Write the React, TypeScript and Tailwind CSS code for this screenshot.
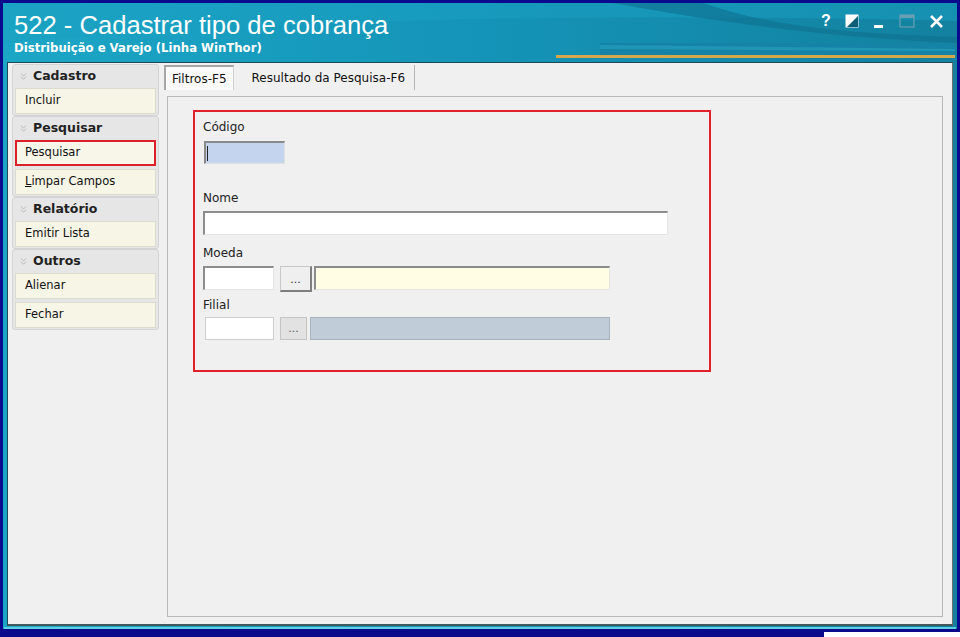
import { ChevronsDown } from 'lucide-react';

const UI = { fontFamily: 'Tahoma, "DejaVu Sans", "Liberation Sans", sans-serif' };

function NavGroup({ title, items, active }: { title: string; items: string[]; active?: string }) {
  return (
    <div className="rounded-[3px] border border-[#d4d4d4] bg-[#e6e6e6] px-[2px] pb-[1px]">
      <div className="flex items-center h-[23px] pl-[3px] gap-[4px]">
        <ChevronsDown className="w-[11px] h-[11px] text-[#a8a8a8]" strokeWidth={1.6} />
        <span className="text-[12.5px] font-bold text-[#222]">{title}</span>
      </div>
      <div className="flex flex-col gap-[3px]">
        {items.map(item => (
          <div
            key={item}
            className={
              item === active
                ? 'h-[26px] flex items-center pl-[8px] text-[11.5px] text-[#111] bg-[#f8f6e9] border-2 border-[#dd1f2a]'
                : 'h-[26px] flex items-center pl-[9px] text-[11.5px] text-[#111] bg-[#f7f5e6] border border-[#dcdbd0]'
            }
          >
            {item === 'Limpar Campos' ? (
              <span><span className="underline">L</span>impar Campos</span>
            ) : item}
          </div>
        ))}
      </div>
    </div>
  );
}

function Sunken({ className }: { className: string }) {
  return (
    <div className={`border-t-2 border-l-2 border-t-[#8c8c8c] border-l-[#8c8c8c] border-r border-b border-r-[#e4e4e4] border-b-[#e4e4e4] ${className}`} />
  );
}

function DotsButton({ raised }: { raised?: boolean }) {
  return (
    <div
      className={
        raised
          ? 'w-[32px] h-[26px] flex items-end justify-center pb-[5px] bg-[#efefef] border border-[#c8c8c8] border-r-2 border-b-2 border-r-[#7e7e7e] border-b-[#7e7e7e] text-[11px] text-[#333] leading-none'
          : 'w-[27px] h-[23px] flex items-end justify-center pb-[5px] bg-[#e2e2e2] border border-[#c4c4c4] text-[11px] text-[#555] leading-none'
      }
    >
      ...
    </div>
  );
}

export default function App() {
  return (
    <div className="w-[960px] h-[637px] bg-[#0a0a8c] pt-[3px] pl-[3px] pr-[3px] relative overflow-hidden" style={UI}>
      <div className="w-[954px] h-[626px] flex flex-col bg-gradient-to-r from-[#1ca6c6] via-[#1494b8] to-[#13819f] relative">
        {/* title bar */}
        <div className="h-[58px] relative overflow-hidden">
          <svg className="absolute inset-0" width="954" height="58" viewBox="0 0 954 58">
            <path d="M0 40 C 250 20, 520 8, 954 18 L954 0 L0 0 Z" fill="#1aa0c2" opacity="0.5" />
            <path d="M610 0 L700 0 C 760 20, 820 30, 954 34 L954 40 C 820 34, 720 20, 610 0 Z" fill="#0f6f90" opacity="0.6" />
            <path d="M597 40 L952 40 L952 55 L597 55 Z" fill="#1583a6" />
            <path d="M597 42 L952 46 L952 48 L597 46 Z" fill="#2aa9c9" opacity="0.5" />
            <path d="M553 52 L952 52 L952 55 L553 55 Z" fill="#d5a64a" />
          </svg>
          <div className="relative pl-[11px] pt-[8px] text-white text-[25.6px] leading-[29px]" style={{ fontFamily: '"Liberation Sans", Arial, sans-serif' }}>
            522 - Cadastrar tipo de cobrança
          </div>
          <div className="relative pl-[11px] text-white text-[11.7px] font-bold leading-[16px]" style={{ fontFamily: '"DejaVu Sans", Tahoma, sans-serif' }}>
            Distribuição e Varejo (Linha WinThor)
          </div>
          <div className="absolute top-[10px] left-[818px] flex items-center gap-[14px] text-white">
            <span className="text-[16px] font-bold leading-none" style={{ fontFamily: '"Liberation Sans", sans-serif' }}>?</span>
            <svg width="14" height="14" viewBox="0 0 14 14">
              <rect x="0.5" y="0.5" width="13" height="13" fill="#fff" />
              <path d="M13 2 L13 13 L2 13 Z" fill="#0d5d78" />
            </svg>
            <svg width="12" height="14" viewBox="0 0 12 14">
              <rect x="1" y="11" width="9" height="3" fill="#fff" />
            </svg>
            <svg width="16" height="14" viewBox="0 0 16 14">
              <rect x="1" y="1" width="14" height="12" fill="none" stroke="#6a9fb3" strokeWidth="1.2" />
              <rect x="1" y="1" width="14" height="3" fill="#6a9fb3" />
            </svg>
            <svg width="15" height="15" viewBox="0 0 15 15">
              <path d="M2 2 L13 13 M13 2 L2 13" stroke="#fff" strokeWidth="2.6" />
            </svg>
          </div>
        </div>
        {/* body */}
        <div className="ml-[4px] mr-[4px] mt-[1px] h-[564px] bg-[#f0f0f0] border-t border-l border-[#1c4a55] border-r border-r-[#6e6e6e] border-b-2 border-b-[#3e5a5e] flex gap-[5px] pt-[1px] pl-[4px]">
          <div className="w-[147px] flex flex-col">
            <NavGroup title="Cadastro" items={['Incluir']} />
            <NavGroup title="Pesquisar" items={['Pesquisar', 'Limpar Campos']} active="Pesquisar" />
            <NavGroup title="Relatório" items={['Emitir Lista']} />
            <NavGroup title="Outros" items={['Alienar', 'Fechar']} />
          </div>
          <div className="flex flex-col">
            <div className="flex items-end h-[26px]">
              <div className="h-[25px] px-[6px] flex items-center text-[12px] text-[#111] bg-[#fafafa] border-t-2 border-l-2 border-t-[#a6a6a6] border-l-[#a6a6a6] border-r border-r-[#d0d0d0]">
                Filtros-F5
              </div>
              <div className="h-[25px] ml-[9px] px-[9px] flex items-center text-[12px] text-[#111] border-r border-r-[#b4b4b4]">
                Resultado da Pesquisa-F6
              </div>
            </div>
            <div className="mt-[6px] ml-[3px] w-[776px] h-[521px] border border-[#b8b8b8] bg-[#f0f0f0] pt-[13px] pl-[25px]">
              <div className="w-[518px] h-[262px] border-2 border-[#e0212c] pl-[8px] pt-[5px] text-[12px] text-[#222]">
                <div className="h-[20px] flex items-center">Código</div>
                <div className="mt-[4px] h-[23px] w-[81px] ml-[1px] bg-[#c4d3ee] border-t-2 border-l-2 border-t-[#8a8a8a] border-l-[#8a8a8a] border-r border-b border-r-[#e0e0e0] border-b-[#e0e0e0] flex items-center pl-[1px]">
                  <div className="w-px h-[15px] bg-[#222]" />
                </div>
                <div className="h-[20px] mt-[24px] flex items-center">Nome</div>
                <Sunken className="mt-[3px] h-[24px] w-[465px] bg-white" />
                <div className="h-[20px] mt-[8px] flex items-center">Moeda</div>
                <div className="mt-[3px] flex items-start">
                  <Sunken className="h-[24px] w-[71px] bg-white" />
                  <div className="ml-[6px]"><DotsButton raised /></div>
                  <Sunken className="ml-[2px] h-[24px] w-[296px] bg-[#fffde3]" />
                </div>
                <div className="h-[20px] mt-[3px] flex items-center">Filial</div>
                <div className="mt-[2px] flex items-start ml-[2px]">
                  <div className="h-[23px] w-[69px] bg-white border border-[#cfcfcf]" />
                  <div className="ml-[6px]"><DotsButton /></div>
                  <div className="ml-[3px] h-[23px] w-[300px] bg-[#c0ccd8] border border-[#a9b3bc]" />
                </div>
              </div>
            </div>
          </div>
        </div>
        <div className="h-[2px] mx-[1px] mt-[1px] bg-[#5fd0e3]" />
      </div>
      <div className="absolute left-[824px] top-[632px] w-[136px] h-[5px] bg-white" />
    </div>
  );
}
